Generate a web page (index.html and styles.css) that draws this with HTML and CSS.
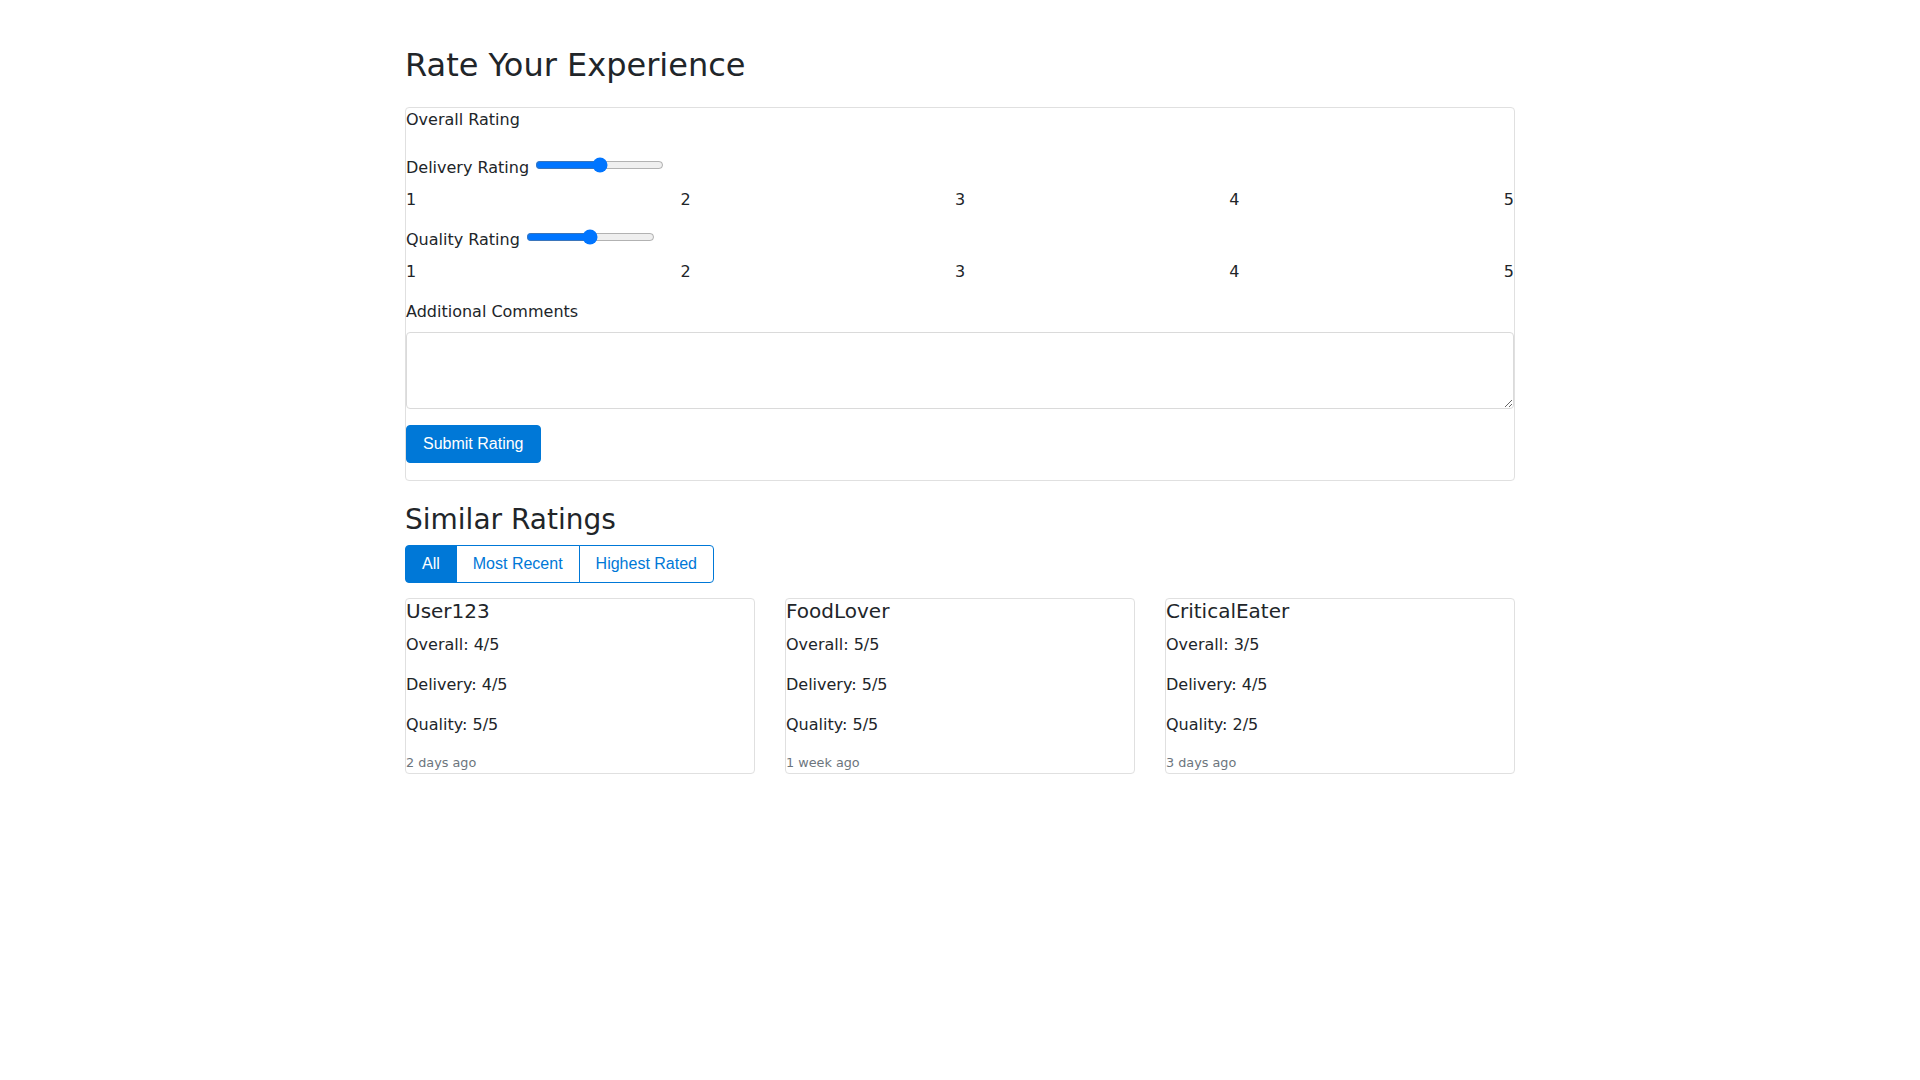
FILE: index.html
```html
<!DOCTYPE html>
<html lang="en">
<head>
    <meta charset="UTF-8">
    <meta name="viewport" content="width=device-width, initial-scale=1.0">
    <title>Rate Your Experience</title>
    <link rel="stylesheet" href="styles.css">
</head>
<body>
    <div class="container">
        <h1>Rate Your Experience</h1>

        <form class="rating-form">
            <div class="form-group">
                <label>Overall Rating</label>
                <div class="stars"></div>
            </div>

            <div class="form-group">
                <label for="delivery">Delivery Rating</label>
                <input type="range" id="delivery" class="slider" min="1" max="5" value="3">
                <div class="scale">
                    <span>1</span><span>2</span><span>3</span><span>4</span><span>5</span>
                </div>
            </div>

            <div class="form-group">
                <label for="quality">Quality Rating</label>
                <input type="range" id="quality" class="slider" min="1" max="5" value="3">
                <div class="scale">
                    <span>1</span><span>2</span><span>3</span><span>4</span><span>5</span>
                </div>
            </div>

            <div class="form-group">
                <label for="comments">Additional Comments</label>
                <textarea id="comments" class="comments"></textarea>
            </div>

            <div class="form-group">
                <button type="button" class="btn btn-primary">Submit Rating</button>
            </div>
        </form>

        <h2>Similar Ratings</h2>
        <div class="btn-group">
            <button type="button" class="btn btn-outline active">All</button>
            <button type="button" class="btn btn-outline">Most Recent</button>
            <button type="button" class="btn btn-outline">Highest Rated</button>
        </div>

        <div class="ratings">
            <div class="rating-card">
                <h5>User123</h5>
                <p>Overall: 4/5</p>
                <p>Delivery: 4/5</p>
                <p>Quality: 5/5</p>
                <small class="muted">2 days ago</small>
            </div>
            <div class="rating-card">
                <h5>FoodLover</h5>
                <p>Overall: 5/5</p>
                <p>Delivery: 5/5</p>
                <p>Quality: 5/5</p>
                <small class="muted">1 week ago</small>
            </div>
            <div class="rating-card">
                <h5>CriticalEater</h5>
                <p>Overall: 3/5</p>
                <p>Delivery: 4/5</p>
                <p>Quality: 2/5</p>
                <small class="muted">3 days ago</small>
            </div>
        </div>
    </div>
</body>
</html>
```

FILE: styles.css
```css
/* Rating page styling */
body {
    margin: 0;
    font-family: "DejaVu Sans", sans-serif;
    font-size: 16px;
    line-height: 1.5;
    color: #212529;
    background-color: #ffffff;
}

.container {
    max-width: 1110px;
    margin: 0 auto;
    padding: 46px 15px 40px;
}

h1 {
    font-size: 32px;
    font-weight: 400;
    line-height: 1.2;
    margin: 0 0 23px;
}

h2 {
    font-size: 28px;
    font-weight: 400;
    line-height: 1.2;
    margin: 0 0 8px;
}

/* Form card */
.rating-form {
    border: 1px solid #e0e0e0;
    border-radius: 4px;
    padding-bottom: 1px;
    margin-bottom: 22px;
}

.form-group {
    margin-bottom: 16px;
}

.form-group label {
    display: inline-block;
    margin-bottom: 8px;
}

.slider {
    vertical-align: top;
    margin: 1px 2px 2px 1px;
}

.scale {
    display: flex;
    justify-content: space-between;
}

.comments {
    display: block;
    width: 100%;
    height: 77px;
    box-sizing: border-box;
    border: 1px solid #dadada;
    border-radius: 4px;
    font-family: "DejaVu Sans", sans-serif;
    font-size: 16px;
    resize: vertical;
}

/* Buttons */
.btn {
    font-family: "Liberation Sans", Arial, sans-serif;
    font-size: 16px;
    line-height: 24px;
    padding: 6px 16px;
    border: 1px solid #0078d7;
    border-radius: 4px;
    cursor: pointer;
}

.btn-primary {
    background-color: #0078d7;
    color: #ffffff;
}

.btn-group {
    display: inline-flex;
    margin-bottom: 15px;
}

.btn-outline {
    background-color: #ffffff;
    color: #0078d7;
    border-radius: 0;
}

.btn-outline + .btn-outline {
    margin-left: -1px;
}

.btn-outline:first-child {
    border-radius: 4px 0 0 4px;
}

.btn-outline:last-child {
    border-radius: 0 4px 4px 0;
}

.btn-outline.active {
    background-color: #0078d7;
    color: #ffffff;
}

/* Similar ratings cards */
.ratings {
    display: grid;
    grid-template-columns: repeat(3, 1fr);
    gap: 30px;
}

.rating-card {
    border: 1px solid #e0e0e0;
    border-radius: 4px;
    padding-bottom: 1px;
}

.rating-card h5 {
    font-size: 20px;
    font-weight: 400;
    line-height: 1.2;
    margin: 0 0 10px;
}

.rating-card p {
    margin: 0 0 16px;
}

.muted {
    display: block;
    font-size: 12.8px;
    color: #6c757d;
}
```
